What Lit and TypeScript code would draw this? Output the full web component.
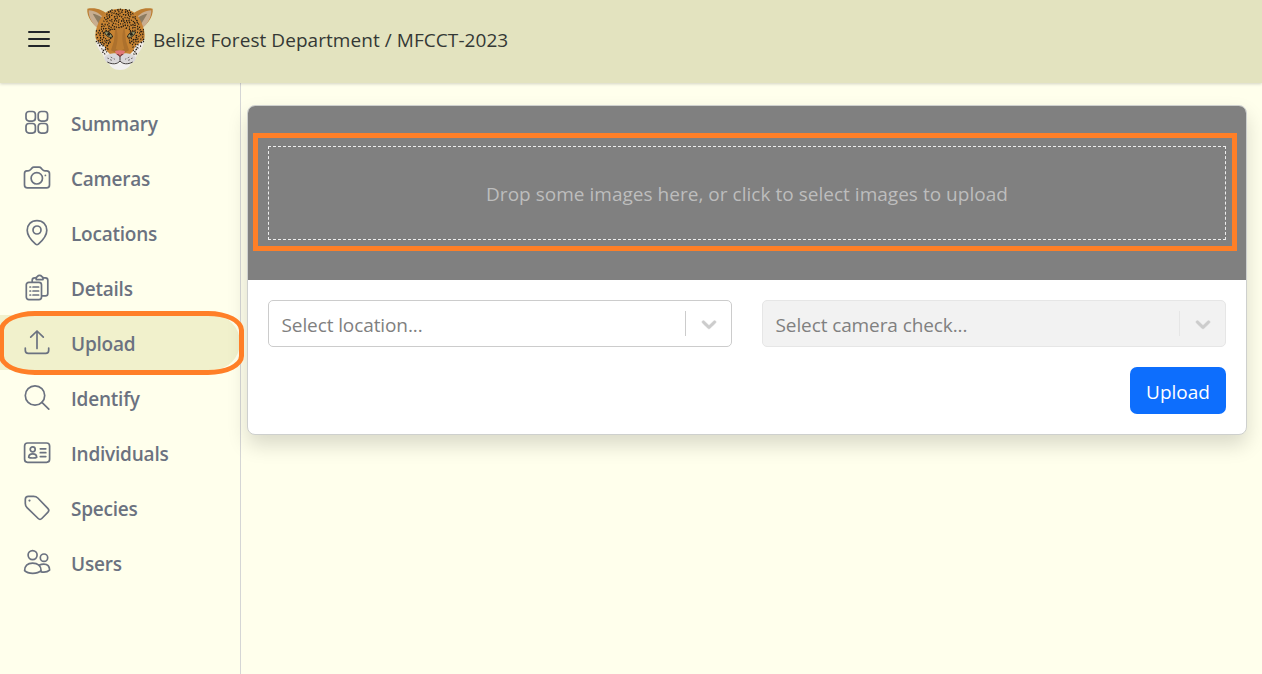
import { LitElement, html, svg, css } from "lit";
import { customElement, property } from "lit/decorators.js";

const ICONS: Record<string, unknown> = {
  summary: svg`<rect x="3" y="2.5" width="9.4" height="9.6" rx="3"/><rect x="15.2" y="2.5" width="9.4" height="9.6" rx="3"/><rect x="3" y="14.5" width="9.4" height="9.6" rx="3"/><rect x="15.2" y="14.5" width="9.4" height="9.6" rx="3"/>`,
  cameras: svg`<path d="M3.8 6.8H5c1.3 0 1.9-.4 2.7-1.3l1.2-1.4c.6-.7 1-.9 2-.9h5.200c1 0 1.400.2 2 .9l1.200 1.400c.8.9 1.400 1.300 2.700 1.300h1.600C25.500 6.800 26.500 7.900 26.500 9.700v11.200c0 1.900-1 2.900-2.900 2.900H4.400c-1.900 0-2.900-1-2.900-2.900V9.700c0-1.800.9-2.900 2.300-2.900z"/><circle cx="13.800" cy="14.300" r="5.700"/><circle cx="22.400" cy="11.400" r=".9" fill="currentColor" stroke="none"/>`,
  locations: svg`<path d="M14 1.600C8 1.600 4.200 5.700 4.200 11.300c0 5.400 5.100 11 8.400 13.900.9.700 1.900.7 2.800 0 3.300-2.900 8.400-8.500 8.400-13.900C23.800 5.700 20 1.600 14 1.600z"/><circle cx="14" cy="11" r="4"/>`,
  details: svg`<rect x="3.300" y="8.300" width="15.200" height="17.300" rx="2.500"/><path d="M9.200 8V6.200c0-1.500.9-2.400 2.400-2.400h1.600M19.800 3.800h2.600c1.500 0 2.400.9 2.400 2.400v13.200c0 1.500-.9 2.400-2.400 2.400h-3.600"/><path d="M13.200 3.300c1.100 0 1.200-1.900 3.400-1.900s2.300 1.900 3.400 1.900v2.300h-6.800z"/><path d="M7 13h.6M7 17h.6M7 21h.6M10 13h5.600M10 17h5.600M10 21h5.600"/>`,
  upload: svg`<path d="M14 19.500V2.300M7.700 8.200L14 2l6.300 6.200M2.300 19v2.200c0 2.200 1.200 3.100 3 3.100h17.400c1.800 0 3-.9 3-3.100V19"/>`,
  identify: svg`<circle cx="12" cy="11.500" r="9.700"/><path d="M18.900 18.400l6.900 6.700"/>`,
  individuals: svg`<rect x="1.600" y="4" width="25" height="19.300" rx="3"/><circle cx="9.700" cy="10.300" r="2.500"/><path d="M5.700 18.300c0-2.300 1.700-3.400 4-3.400s4 1.100 4 3.400c-1.200.9-6.800.9-8 0z"/><path d="M17.300 9.800h5.500M17.300 13.700h5.500M17.300 17.600h5.500"/>`,
  species: svg`<path d="M2.300 5.400c0-2 1.100-3 3-3h5.300c1.900 0 3 .4 4.200 1.600l10 10.300c1.300 1.300 1.300 2.700 0 4l-6 6.200c-1.200 1.200-2.400 1.200-3.600 0L4 13.600c-1.200-1.200-1.700-2.400-1.700-4.100z"/><circle cx="6.500" cy="6.600" r="1.100" fill="currentColor" stroke="none"/>`,
  users: svg`<circle cx="9.600" cy="6.100" r="4.500"/><circle cx="21" cy="8.700" r="3.700"/><path d="M1.600 21.700C1.600 17 4.400 14.200 9.600 14.200s8.500 2.800 8.500 7.500c-3.800 3.600-12.900 3.600-16.500 0z"/><path d="M16.200 16.300c1.300-.8 2.700-1.200 4.600-1.200 3.600 0 5.800 2.200 5.800 6-2 1.800-5.400 2.300-8.500 1.700"/>`,
};

function coatSpots() {
  const out: unknown[] = [];
  let seed = 11;
  const rnd = () => ((seed = (seed * 16807) % 2147483647) / 2147483647);
  const placed: number[][] = [];
  for (let i = 0; i < 6000; i++) {
    const px = 44 + rnd() * 152;
    const py = 28 + rnd() * 136;
    const d = Math.abs(px - 120);
    const onForehead = py < 88 && d < 18 + Math.sqrt(Math.max(0, py - 26)) * 5.6 && (d > 14 || py < 84);
    const onCheek = py >= 88 && d > 27 + Math.max(0, (py - 120) * 0.35) && d < 71 - Math.max(0, py - 126) * 0.62;
    const nearEye = Math.abs(d - 34) < 14 && Math.abs(py - 104) < 10;
    if ((!onForehead && !onCheek) || nearEye) continue;
    const gap = 5.9;
    if (placed.some(([x, y]) => Math.hypot(x - px, y - py) < gap)) continue;
    placed.push([px, py]);
    const r = 1.5 + rnd() * 0.7;
    out.push(svg`<ellipse cx=${px.toFixed(1)} cy=${py.toFixed(1)} rx=${r.toFixed(1)} ry=${(r + 1).toFixed(1)} transform=${`rotate(${Math.round(rnd() * 140 - 70)} ${px.toFixed(1)} ${py.toFixed(1)})`}/>`);
  }
  return out;
}

@customElement("jaguar-logo")
class JaguarLogo extends LitElement {
  static styles = css`
    :host { display: block; width: 80px; height: 80px; }
    .art { display: block; width: 80px; height: 80px; }
  `;
  render() {
    return html`<svg class="art" viewBox="0 0 240 240" aria-hidden="true">
      <path d="M66 88C40 80 19 50 22 26c23-5 50 3 64 21zM174 88c26-8 47-38 44-62-23-5-50 3-64 21z" fill="#bd7e32"/>
      <path d="M58 87C39 78 25 52 26 31c18 0 38 11 48 28zM182 87c19-9 33-35 32-56-18 0-38 11-48 28z" fill="#c8ae90"/>
      <path d="M64 84L38 41c16 2 29 10 39 26zM176 84l26-43c-16 2-29 10-39 26z" fill="#8d7c61"/>
      <path d="M47 116c0 14 5 26 13 37 7 8 11 14 13 24h94c2-10 6-16 13-24 8-11 13-23 13-37z" fill="#eeeae5"/>
      <path d="M120 26c-24 0-46 8-56 26-10 17-18 36-18 54 0 10 2 16 10 20 13 6 20 14 24 26l12 12h56l12-12c4-12 11-20 24-26 8-4 10-10 10-20 0-18-8-37-18-54-10-18-32-26-56-26z" fill="#c78332"/>
      <path d="M106 84l14-4 14 4 4 39 9 28-27 14-27-14 9-28z" fill="#ad712d"/>
      <path d="M108 84c8 20 5 44-1 62l13 7 13-7c-6-18-9-42-1-62z" fill="#bd7d32"/>
      <g fill="#211b12">${coatSpots()}</g>
      <path d="M73 96c10-3 20 1 25 15-9 3-18 0-25-15zM167 96c-10-3-20 1-25 15 9 3 18 0 25-15z" fill="#a1a16d" stroke="#272219" stroke-width="3"/>
      <circle cx="86" cy="103" r="4.500" fill="#22221b"/><circle cx="154" cy="103" r="4.500" fill="#22221b"/>
      <path d="M73 172c6-9 20-12 33-12l14 8 14-8c13 0 27 3 33 12 0 12-9 21-24 20-10 0-18-2-23-6-5 4-13 6-23 6-15 1-23-8-24-20z" fill="#d9d7d9"/>
      <path d="M87 187c10 4 23 0 33-2 10 2 23 6 33 2-1 14-15 23-33 23s-32-9-33-23z" fill="#f1f0ef"/>
      <path d="M82 186c15 8 29 7 38-3 9 10 23 11 38 3M120 168v14" fill="none" stroke="#272323" stroke-width="2.600"/>
      <path d="M82 174l5 2m5-5l5 3m-7 5l6 2m5-5l4 2M158 174l-5 2m-5-5l-5 3m7 5l-6 2m-5-5l-4 2" stroke="#49413d" stroke-width="2"/>
      <path d="M105 153c9-3 21-3 30 0-1 8-7 12-15 16-8-4-14-8-15-16z" fill="#e07676"/>
      <path d="M109 162l6 0 5 5 5-5 6 0-11 9z" fill="#7a3a3a"/>
    </svg>`;
  }
}

@customElement("select-box")
class SelectBox extends LitElement {
  @property() label = "";
  @property({ type: Boolean, reflect: true }) disabled = false;
  static styles = css`
    :host { display: flex; flex: 1; align-items: center; box-sizing: border-box; height: 47px; border: 1px solid #ccc; border-radius: 5px; background: #fff; color: #808080; }
    :host([disabled]) { background: #f2f2f2; border-color: #e6e6e6; }
    .label { flex: 1; padding: 3px 0 0 12.5px; white-space: nowrap; letter-spacing: -.1px; }
    .divider { width: 1px; height: 25px; margin-top: -1px; background: #ccc; }
    :host([disabled]) .divider { background: #e6e6e6; }
    .chevron { width: 24px; height: 24px; margin: 0 10.500px; fill: #ccc; stroke: #ccc; stroke-width: .5; }
  `;
  render() {
    return html`<span class="label">${this.label}</span><span class="divider"></span>
      <svg class="chevron" viewBox="0 0 20 20"><path d="M4.516 7.548c0.436-0.446 1.043-0.481 1.576 0l3.908 3.747 3.908-3.747c0.533-0.481 1.141-0.446 1.574 0 0.436 0.445 0.408 1.197 0 1.615-0.406 0.418-4.695 4.502-4.695 4.502-0.217 0.223-0.502 0.335-0.787 0.335s-0.570-0.112-0.789-0.335c0 0-4.287-4.084-4.695-4.502s-0.436-1.170 0-1.615z"/></svg>`;
  }
}

@customElement("app-root")
class AppRoot extends LitElement {
  static styles = css`
    :host { display: flex; flex-direction: column; position: relative; height: 674px; overflow: hidden; background: #ffffec; color: #212529; font: 19px/30px "Open Sans", "Noto Sans", sans-serif; }
    .header { display: flex; height: 83px; flex: none; background: #e3e3bf; box-shadow: 0 1px 3px rgba(0, 0, 0, .18); z-index: 1; }
    .menu { width: 24px; height: 24px; margin: 27px 0 0 27px; stroke: #212529; stroke-width: 2; stroke-linecap: round; }
    .logo { margin-left: 29px; }
    .title { margin: 25px 0 0 -7px; white-space: nowrap; letter-spacing: .06px; color: #343835; }
    .body { display: flex; flex: 1; min-height: 0; }
    .nav { width: 240px; flex: none; padding-top: 12px; border-right: 1px solid #d5d6d5; }
    .item { display: flex; align-items: center; height: 55px; padding-left: 23px; gap: 20px; color: #6b7280; font-weight: 600; box-sizing: border-box; }
    .item.active { background: #f1f1cc; border-radius: 0 28px 28px 0; }
    .icon { width: 28px; height: 28px; margin-top: 1px; fill: none; stroke: currentColor; stroke-width: 1.700; stroke-linecap: round; stroke-linejoin: round; }
    .name { padding-top: 2px; letter-spacing: -.22px; }
    .main { flex: 1; padding: 22px 15px 0 6px; }
    .card { position: relative; height: 330px; box-sizing: border-box; border: 1px solid #ced0ce; border-radius: 8px; background: #fff; box-shadow: 0 10px 20px rgba(0, 0, 0, .15); display: flex; flex-direction: column; }
    .drop { height: 174px; box-sizing: border-box; padding: 40px 20px; background: #808080; border-radius: 7px 7px 0 0; }
    .zone { height: 94px; box-sizing: border-box; border: 1px dashed #eee; padding-top: 2px; display: flex; align-items: center; justify-content: center; color: #bdbdbd; letter-spacing: .025px; }
    .fields { display: flex; gap: 30px; padding: 20px 20px 0; }
    .actions { display: flex; justify-content: flex-end; padding: 20px 20px 0; }
    .button { width: 96px; height: 47px; border: 0; border-radius: 7px; padding: 2px 0 0; background: #0d6efd; color: #fff; font: inherit; letter-spacing: 0; }
    .mark { position: absolute; box-sizing: border-box; border: 5px solid #ff7f27; pointer-events: none; z-index: 3; }
    .mark-zone { left: 253px; top: 133px; width: 984px; height: 118px; }
    .mark-nav { left: -1px; top: 311px; width: 245px; height: 64px; border-radius: 36px / 19px; }
  `;
  render() {
    const items = ["Summary", "Cameras", "Locations", "Details", "Upload", "Identify", "Individuals", "Species", "Users"];
    return html`
      <header class="header">
        <svg class="menu" viewBox="0 0 24 24"><path d="M2 5h20M2 12h20M2 19h20"/></svg>
        <jaguar-logo class="logo"></jaguar-logo>
        <span class="title">Belize Forest Department / MFCCT-2023</span>
      </header>
      <div class="body">
        <nav class="nav">
          ${items.map((n) => html`<div class="item ${n === "Upload" ? "active" : ""}">
            <svg class="icon" viewBox="0 0 28 28">${ICONS[n.toLowerCase()]}</svg><span class="name">${n}</span>
          </div>`)}
        </nav>
        <main class="main">
          <section class="card">
            <div class="drop"><div class="zone">Drop some images here, or click to select images to upload</div></div>
            <div class="fields">
              <select-box label="Select location..."></select-box>
              <select-box label="Select camera check..." disabled></select-box>
            </div>
            <div class="actions"><button class="button">Upload</button></div>
          </section>
        </main>
      </div>
      <div class="mark mark-zone"></div>
      <div class="mark mark-nav"></div>`;
  }
}
